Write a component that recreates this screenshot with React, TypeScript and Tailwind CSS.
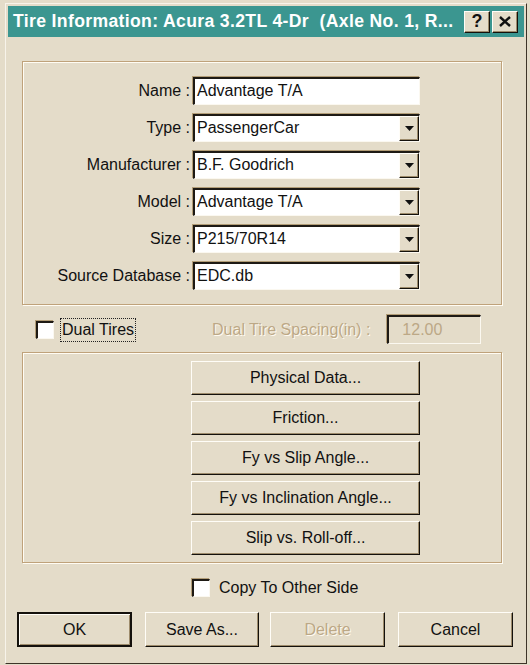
import React from "react";

const raised =
  "bg-[#e4dcc9] border-t border-l border-t-[#fffdf7] border-l-[#fffdf7] border-r border-b border-r-[#14110c] border-b-[#14110c] shadow-[inset_-1px_-1px_0_#9d8b6b]";
const sunken =
  "border-t-2 border-l-2 border-t-[#1e1a14] border-l-[#1e1a14] border-r border-b border-r-[#fbf8f0] border-b-[#fbf8f0] shadow-[-1px_-1px_0_#b29d77]";
const groupBox =
  "border border-[#bfa27a] shadow-[inset_1px_1px_0_#fffcf3,1px_1px_0_#fffcf3]";

function Field({
  label,
  value,
  combo,
}: {
  label: string;
  value: string;
  combo?: boolean;
}) {
  return (
    <div className="flex items-center h-[28px]">
      <div className="w-[167px] text-right whitespace-pre">{label} :</div>
      <div
        className={`ml-[3px] w-[227px] h-[28px] bg-white flex items-stretch ${sunken}`}
      >
        <div className="flex-1 pl-[2px] leading-[24px] whitespace-nowrap overflow-hidden">
          {value}
        </div>
        {combo && (
          <div className={`w-[20px] flex items-center justify-center ${raised}`}>
            <svg width="9" height="5" viewBox="0 0 9 5">
              <path d="M0 0h9L4.5 5z" fill="#111" />
            </svg>
          </div>
        )}
      </div>
    </div>
  );
}

function Check() {
  return <div className={`w-[18px] h-[18px] bg-white ${sunken}`} />;
}

function Btn({
  children,
  w,
  def,
  disabled,
}: {
  children: React.ReactNode;
  w: string;
  def?: boolean;
  disabled?: boolean;
}) {
  return (
    <div
      className={`${w} h-[35px] flex items-center justify-center ${
        def
          ? "bg-[#e4dcc9] border-2 border-[#14110c] shadow-[inset_1px_1px_0_#fffdf7,inset_-1px_-1px_0_#9d8b6b]"
          : raised
      } ${disabled ? "text-[#bca886] [text-shadow:1px_1px_0_#fffaf0]" : ""}`}
    >
      {children}
    </div>
  );
}

export default function App() {
  const fields = [
    { label: "Name", value: "Advantage T/A" },
    { label: "Type", value: "PassengerCar", combo: true },
    { label: "Manufacturer", value: "B.F. Goodrich", combo: true },
    { label: "Model", value: "Advantage T/A", combo: true },
    { label: "Size", value: "P215/70R14", combo: true },
    { label: "Source Database", value: "EDC.db", combo: true },
  ];
  const tireButtons = [
    "Physical Data...",
    "Friction...",
    "Fy vs Slip Angle...",
    "Fy vs Inclination Angle...",
    "Slip vs. Roll-off...",
  ];

  return (
    <div className="w-[530px] h-[665px] bg-[#e4dcc9] pt-[3px] pl-[5px] overflow-hidden font-['Liberation_Sans',Arial,sans-serif] text-[16px] text-[#111]">
      <div className="w-[522px] h-[661px] border-l border-t border-[#f7f3ea] border-r border-b border-r-[#3d3428] border-b-[#3d3428] p-[2px]">
        {/* title bar */}
        <div className="h-[31px] bg-[#3b9690] flex items-center pl-[5px] pr-[6px]">
          <div className="flex-1 text-white font-bold text-[17.6px] tracking-[0.35px] whitespace-pre">
            Tire Information: Acura 3.2TL 4-Dr  (Axle No. 1, R...
          </div>
          <div className={`w-[26px] h-[22px] flex items-center justify-center font-bold text-[18px] ${raised}`}>
            ?
          </div>
          <div className={`ml-[2px] w-[26px] h-[22px] flex items-center justify-center ${raised}`}>
            <svg width="12" height="11" viewBox="0 0 12 11">
              <path d="M1 1l10 9M11 1l-10 9" stroke="#111" strokeWidth="2.4" />
            </svg>
          </div>
        </div>

        <div className="pl-[9px]">
          {/* main group */}
          <div className={`ml-[5px] mt-[24px] w-[480px] h-[244px] pt-[15px] flex flex-col gap-[9px] ${groupBox}`}>
            {fields.map((f) => (
              <Field key={f.label} {...f} />
            ))}
          </div>

          {/* dual tires */}
          <div className="ml-[5px] mt-[10px] h-[29px] flex items-center">
            <div className="ml-[14px]">
              <Check />
            </div>
            <div className="ml-[6px] px-[1px] h-[24px] leading-[22px] border border-dotted border-[#222]">
              Dual Tires
            </div>
            <div className="ml-[76px] text-[#bca886] [text-shadow:1px_1px_0_#fffaf0]">
              Dual Tire Spacing(in) :
            </div>
            <div className={`ml-[17px] w-[94px] h-[29px] bg-[#e4dcc9] text-[#bca886] pl-[13px] leading-[26px] ${sunken}`}>
              12.00
            </div>
          </div>

          {/* tire data group */}
          <div className={`ml-[5px] mt-[8px] w-[480px] h-[211px] pt-[8px] pl-[168px] flex flex-col gap-[6px] ${groupBox}`}>
            {tireButtons.map((b) => (
              <div key={b} className={`w-[229px] h-[34px] flex items-center justify-center ${raised}`}>
                {b}
              </div>
            ))}
          </div>

          {/* copy */}
          <div className="mt-[15px] ml-[175px] h-[19px] flex items-center">
            <Check />
            <span className="ml-[9px]">Copy To Other Side</span>
          </div>

          {/* bottom buttons */}
          <div className="mt-[15px] flex">
            <Btn w="w-[115px]" def>
              OK
            </Btn>
            <div className="ml-[13px]">
              <Btn w="w-[114px]">Save As...</Btn>
            </div>
            <div className="ml-[11px]">
              <Btn w="w-[115px]" disabled>
                Delete
              </Btn>
            </div>
            <div className="ml-[13px]">
              <Btn w="w-[115px]">Cancel</Btn>
            </div>
          </div>
        </div>
      </div>
    </div>
  );
}
